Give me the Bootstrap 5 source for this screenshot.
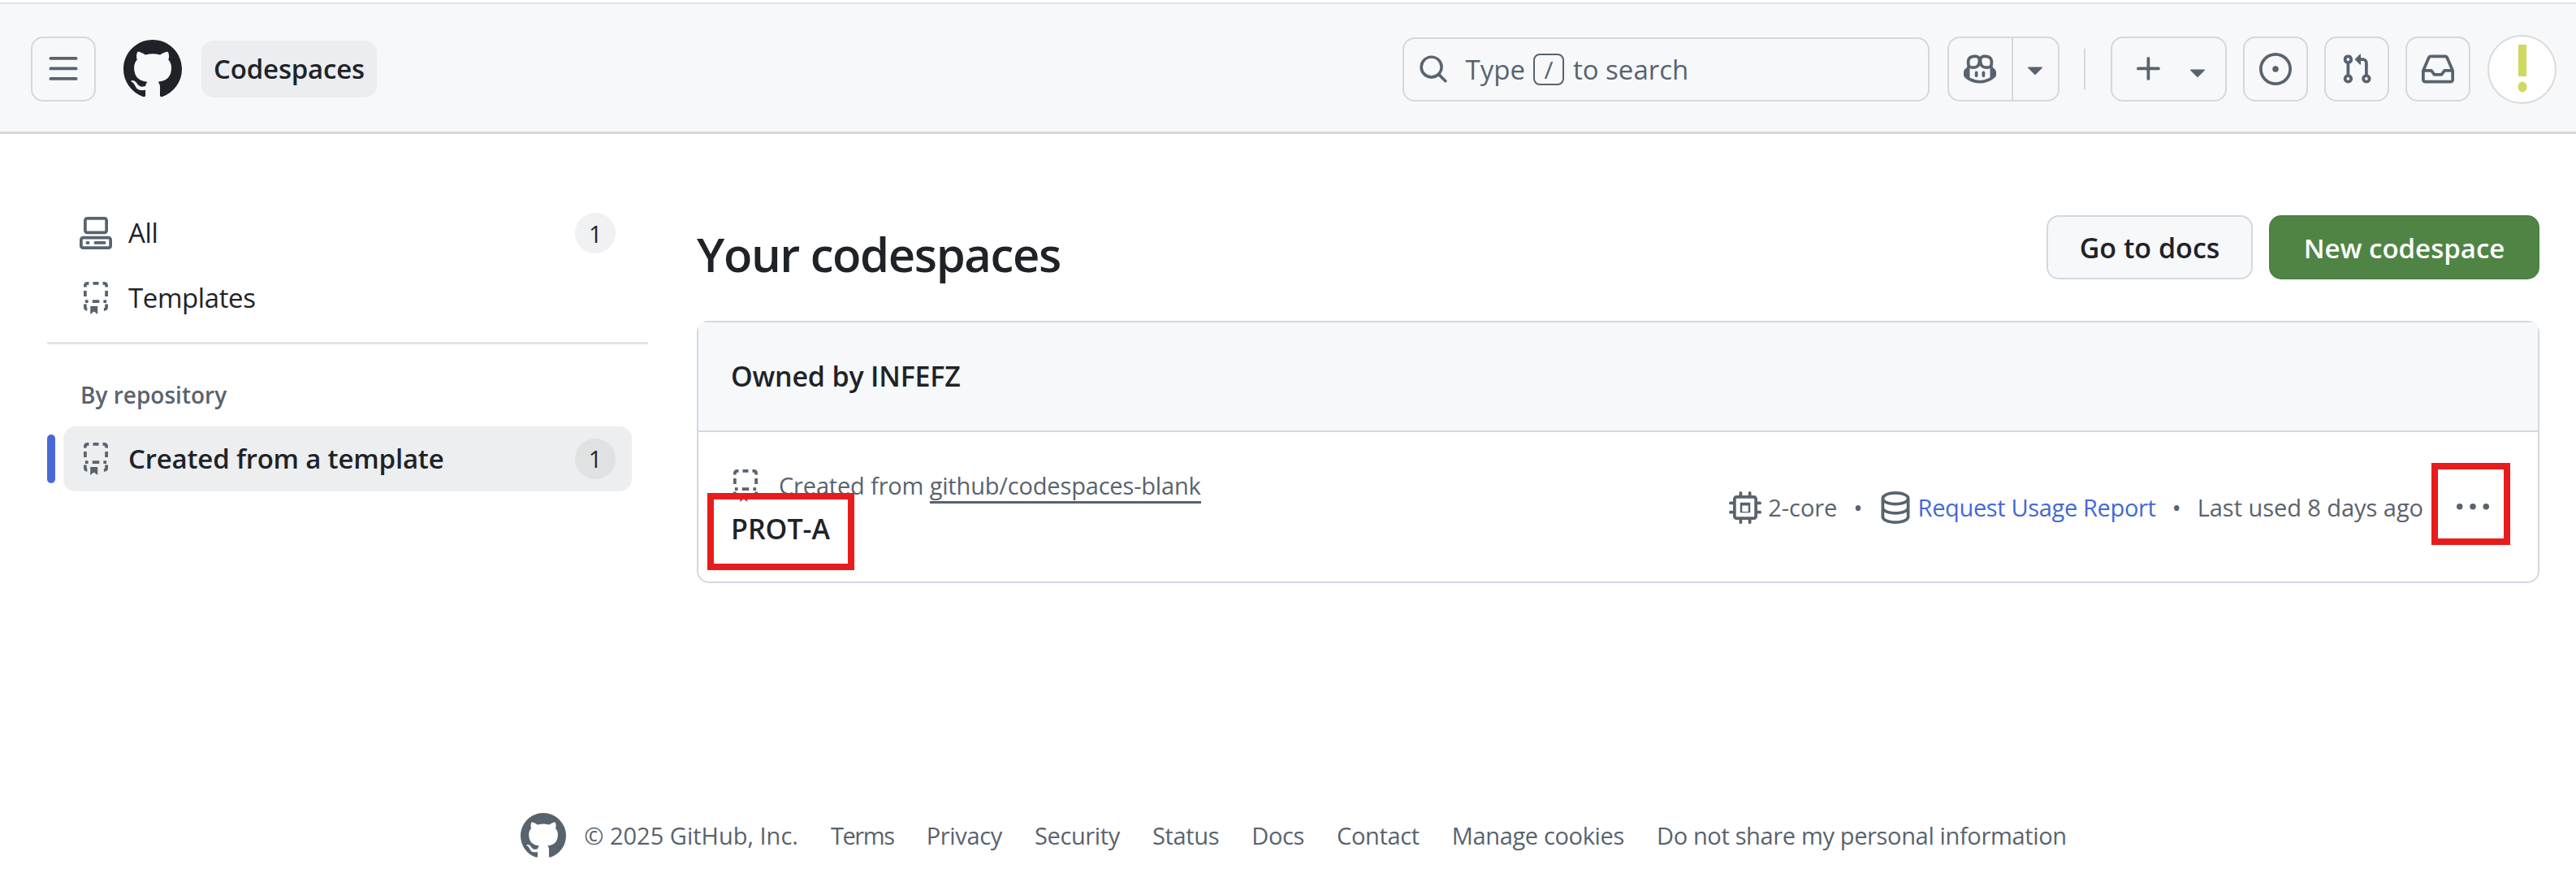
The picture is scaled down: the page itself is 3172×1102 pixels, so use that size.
<!DOCTYPE html>
<html lang="en">
<head>
  <meta charset="UTF-8" />
  <title>Your codespaces</title>
  <link href="https://cdn.jsdelivr.net/npm/bootstrap@5.3.3/dist/css/bootstrap.min.css" rel="stylesheet"/>
  <style>
    body { font-family: "Open Sans", "Liberation Sans", sans-serif; font-size: 33px; color: #1f2328; background: #fff; }
    svg { fill: currentColor; flex-shrink: 0; display: block; }
    .ic { width: 40px; height: 40px; }

    /* top bar */
    .topbar { margin-top: 3px; height: 162px; background: #f6f8fa; border-top: 2px solid #e1e3e6; border-bottom: 3px solid #d3d8dc; padding: 3px 24px 0 38px; }
    .sq-btn { width: 80px; height: 80px; padding: 0; border: 2.5px solid #d1d9e0; border-radius: 15px; color: #59636e; background: transparent; }
    .gh-logo { width: 72px; height: 72px; margin-left: 34px; color: #1f2328; }
    .ctx-pill { margin-left: 24px; height: 70px; width: 216px; background: #ebedf0; border-radius: 15px; font-weight: 600; font-size: 33px; letter-spacing: -.2px; }
    .searchbox { width: 649px; height: 79px; margin-right: 22px; border: 2.5px solid #d1d9e0; border-radius: 15px; color: #59636e; padding: 2px 0 0 17px; }
    .searchbox .ic { width: 38px; height: 38px; margin: -2px 21px 0 0; }
    .slash-key { width: 38px; height: 39px; margin: -2px 11px 0 10px; border: 2.5px solid #59636e; border-radius: 8px; font-size: 30px; }
    .split-btn { width: 138px; height: 80px; border: 2.5px solid #d1d9e0; border-radius: 15px; color: #59636e; }
    .split-btn > span { height: 100%; }
    .split-btn .split-l { width: 79px; border-right: 2.5px solid #d1d9e0; }
    .split-btn .split-r { flex: 1; }
    .bar-sep { width: 2.5px; height: 50px; background: #d1d9e0; margin: 0 31px 0 30px; }
    .plus-btn { width: 143px; height: 80px; border: 2.5px solid #d1d9e0; border-radius: 15px; color: #59636e; padding-left: 25px; margin-right: 20px; }
    .plus-btn .tri { margin: 6px 0 0 20px; }
    .tri { width: 40px; height: 40px; }
    .gap-btn { margin-right: 20px; }
    .gap-last { margin-right: 21px; }
    .avatar-btn { width: 85px; height: 85px; border: 2.5px solid #d9dadc; border-radius: 50%; background: #fff; }
    .avatar-mark { width: 40px; height: 64px; fill: #cfd85f; }

    /* page body */
    .page-wrap { padding: 0 45px 0 58px; }
    .side-col { width: 740px; padding-top: 82px; margin-right: 60px; flex-shrink: 0; }
    .side-link { height: 80px; padding: 0 20px; margin-left: 20px; width: 700px; color: #1f2328; text-decoration: none; letter-spacing: -.4px; }
    .side-link .ic { color: #59636e; margin-right: 20px; }
    .side-count { width: 50px; height: 50px; border-radius: 50%; background: #eff1f3; font-size: 29px; font-weight: 400; color: #1f2328; padding: 0; }
    .side-rule { height: 2.5px; opacity: 1; border: 0; background: #e1e5ea; margin: 14px 0 0; }
    .side-head { font-size: 28px; font-weight: 600; color: #59636e; margin: 43px 0 20px 41px; line-height: 38px; }
    .side-active { background: #eceef0; border-radius: 15px; font-weight: 600; position: relative; letter-spacing: -.2px; }
    .side-active .side-count { background: #dfe1e3; }
    .side-active::before { content: ""; position: absolute; left: -20px; top: 10px; width: 10px; height: 60px; border-radius: 5px; background: #4969d6; }

    .main-col { flex: 1; padding-top: 100px; }
    .main-title { font-size: 58px; font-weight: 600; margin: -2px 0 2px; line-height: 100px; letter-spacing: -1.4px; }
    .act-btn { height: 79px; font-size: 34px; font-weight: 600; border-radius: 15px; padding: 2px 0 0; }
    .act-docs { width: 254px; background: #f6f8fa; border: 2.5px solid #d1d9e0; color: #1f2328; margin-right: 20px; }
    .act-new { width: 333px; font-size: 33px; background: #508445; border: 2.5px solid #4d8043; color: #fff; }
    .spaces-card { margin-top: 30px; border: 2.5px solid #d1d9e0; border-radius: 15px; }
    .spaces-card .card-header { height: 135px; background: #f6f8fa; border-bottom: 2.5px solid #d1d9e0; padding: 0 0 0 40px; font-weight: 600; font-size: 34px; letter-spacing: -.2px; }
    .spaces-row { height: 184px; padding: 0 0 0 40px; }
    .created-wrap { padding-top: 5px; }
    .created-line { font-size: 29px; color: #59636e; height: 40px; margin-top: -3px; letter-spacing: -.17px; }
    .created-line .ic { width: 40px; margin-left: -2px; margin-right: 21px; }
    .created-line a { color: #59636e; text-decoration: none; border-bottom: 3px solid #59636e; line-height: 37px; }
    .space-name { font-weight: 600; font-size: 34px; line-height: 44px; margin-top: 11px; }
    .meta-line { font-size: 29px; color: #59636e; margin: 2px 60px 0 0; letter-spacing: -.05px; }
    .meta-line a { color: #4169d6; text-decoration: none; letter-spacing: -.35px; }
    .meta-dot { margin: 0 20px; font-size: 30px; line-height: 1; }
    .kebab { width: 40px; height: 40px; margin-left: 41px; color: #59636e; }
    .red-box { position: absolute; border: 8px solid #e81c1c; pointer-events: none; }
    .red-a { left: 11px; top: 210px; width: 181px; height: 95px; }
    .red-b { left: 2134px; top: 173px; width: 97px; height: 101px; }

    /* footer */
    .foot-row { margin-top: 283px; padding-left: 14px; color: #59636e; font-size: 29px; letter-spacing: -.35px; }
    .foot-row svg { width: 56px; height: 56px; margin-right: 22px; }
    .foot-row a { color: #59636e; text-decoration: none; margin-left: 40px; }
    .foot-copy { letter-spacing: 0; }
    .foot-row a.foot-short { letter-spacing: -1.4px; }
  </style>
</head>
<body>

<svg width="0" height="0" class="position-absolute">
  <defs>
    <symbol id="i-mark" viewBox="0 0 16 16"><path d="M8 0c4.42 0 8 3.58 8 8a8.013 8.013 0 0 1-5.45 7.59c-.4.08-.55-.17-.55-.38 0-.27.01-1.13.01-2.2 0-.75-.25-1.23-.54-1.48 1.78-.2 3.65-.88 3.65-3.95 0-.88-.31-1.59-.82-2.15.08-.2.36-1.02-.08-2.12 0 0-.67-.22-2.2.82-.64-.18-1.32-.27-2-.27-.68 0-1.36.09-2 .27-1.53-1.03-2.2-.82-2.2-.82-.44 1.1-.16 1.92-.08 2.12-.51.56-.82 1.28-.82 2.15 0 3.06 1.86 3.75 3.64 3.95-.23.2-.44.55-.51 1.07-.46.21-1.61.55-2.33-.66-.15-.24-.6-.83-1.23-.82-.67.01-.27.38.01.53.34.19.73.9.82 1.13.16.45.68 1.31 2.69.94 0 .67.01 1.3.01 1.49 0 .21-.15.45-.55.38A7.995 7.995 0 0 1 0 8c0-4.42 3.58-8 8-8Z"/></symbol>
    <symbol id="i-tri" viewBox="0 0 16 16"><path d="m4.427 7.427 3.396 3.396a.25.25 0 0 0 .354 0l3.396-3.396A.25.25 0 0 0 11.396 7H4.604a.25.25 0 0 0-.177.427Z"/></symbol>
    <symbol id="i-template" viewBox="0 0 16 16">
      <g fill="none" stroke="currentColor" stroke-width="1.5">
        <path d="M2.75 2.6V2c0-.75.5-1.25 1.25-1.25h.6M6.6 .75h2.8M11.4 .75h.6c.75 0 1.25.5 1.25 1.25v.6M2.75 4.4v2.8M13.25 4.4v2.8M2.75 9.6h1.5M6.3 9.6h3.4M11.75 9.6h1.5M2.75 11v1.4c0 .7.4 1.1 1 1.1M13.25 11v1.4c0 .7-.4 1.1-1 1.1h-.3"/>
      </g>
      <path d="M5.3 12h3.6v4L7.1 14.6 5.3 16Z"/>
    </symbol>
  </defs>
</svg>

<!-- top bar -->
<header class="topbar d-flex align-items-center">
  <button class="sq-btn btn d-flex align-items-center justify-content-center" type="button">
    <svg class="ic" viewBox="0 0 16 16"><path d="M1 2.75A.75.75 0 0 1 1.75 2h12.5a.75.75 0 0 1 0 1.5H1.75A.75.75 0 0 1 1 2.75Zm0 5A.75.75 0 0 1 1.75 7h12.5a.75.75 0 0 1 0 1.5H1.75A.75.75 0 0 1 1 7.75ZM1.75 12h12.5a.75.75 0 0 1 0 1.5H1.75a.75.75 0 0 1 0-1.5Z"/></svg>
  </button>
  <svg class="gh-logo"><use href="#i-mark"/></svg>
  <div class="ctx-pill d-flex align-items-center justify-content-center">Codespaces</div>

  <div class="ms-auto searchbox d-flex align-items-center">
    <svg class="ic" viewBox="0 0 16 16"><path d="M10.68 11.74a6 6 0 0 1-7.922-8.982 6 6 0 0 1 8.982 7.922l3.04 3.04a.749.749 0 0 1-.326 1.275.749.749 0 0 1-.734-.215ZM11.5 7a4.499 4.499 0 1 0-8.997 0A4.499 4.499 0 0 0 11.5 7Z"/></svg>
    <span>Type</span>
    <span class="slash-key d-flex align-items-center justify-content-center">/</span>
    <span>to search</span>
  </div>

  <div class="split-btn d-flex align-items-center">
    <span class="split-l d-flex align-items-center justify-content-center">
      <svg class="ic" viewBox="0 0 16 16"><path d="M7.998 15.035c-4.562 0-7.873-2.914-7.998-3.749V9.338c.085-.628.677-1.686 1.588-2.065.013-.07.024-.143.036-.218.029-.183.06-.384.126-.612-.201-.508-.254-1.084-.254-1.656 0-.87.128-1.769.693-2.484.579-.733 1.494-1.124 2.724-1.261 1.206-.134 2.262.034 2.944.765.05.053.096.108.139.165.044-.057.094-.112.143-.165.682-.731 1.738-.899 2.944-.765 1.23.137 2.145.528 2.724 1.261.566.715.693 1.614.693 2.484 0 .572-.053 1.148-.254 1.656.066.228.098.429.126.612.012.076.024.148.037.218.924.385 1.522 1.471 1.591 2.095v1.872c0 .766-3.351 3.795-8.002 3.795Zm0-1.485c2.28 0 4.584-1.11 5.002-1.433V7.862l-.023-.116c-.49.21-1.075.291-1.727.291-1.146 0-2.059-.327-2.71-.991A3.222 3.222 0 0 1 8 6.303a3.24 3.24 0 0 1-.544.743c-.65.664-1.563.991-2.71.991-.652 0-1.236-.081-1.727-.291l-.023.116v4.255c.419.323 2.722 1.433 5.002 1.433ZM6.762 2.83c-.193-.206-.637-.413-1.682-.297-1.019.113-1.479.404-1.713.7-.247.312-.369.789-.369 1.554 0 .793.129 1.171.308 1.371.162.181.519.379 1.442.379.853 0 1.339-.235 1.638-.54.315-.322.527-.827.617-1.553.117-.935-.037-1.395-.241-1.614Zm4.155-.297c-1.044-.116-1.488.091-1.681.297-.204.219-.359.679-.242 1.614.091.726.303 1.231.618 1.553.299.305.784.54 1.638.54.922 0 1.28-.198 1.442-.379.179-.2.308-.578.308-1.371 0-.765-.123-1.242-.37-1.554-.233-.296-.693-.587-1.713-.7Z"/><path d="M6.25 9.037a.75.75 0 0 1 .75.75v1.501a.75.75 0 0 1-1.5 0V9.787a.75.75 0 0 1 .75-.75Zm4.25.75v1.501a.75.75 0 0 1-1.5 0V9.787a.75.75 0 0 1 1.5 0Z"/></svg>
    </span>
    <span class="split-r d-flex align-items-center justify-content-center"><svg class="tri"><use href="#i-tri"/></svg></span>
  </div>
  <span class="bar-sep"></span>
  <div class="plus-btn d-flex align-items-center">
    <svg class="ic" viewBox="0 0 16 16"><path d="M7.75 2a.75.75 0 0 1 .75.75V7h4.25a.75.75 0 0 1 0 1.5H8.5v4.25a.75.75 0 0 1-1.5 0V8.5H2.75a.75.75 0 0 1 0-1.5H7V2.75A.75.75 0 0 1 7.75 2Z"/></svg>
    <svg class="tri"><use href="#i-tri"/></svg>
  </div>
  <button class="sq-btn gap-btn btn d-flex align-items-center justify-content-center" type="button">
    <svg class="ic" viewBox="0 0 16 16"><path d="M8 9.5a1.5 1.5 0 1 0 0-3 1.5 1.5 0 0 0 0 3Z"/><path d="M8 0a8 8 0 1 1 0 16A8 8 0 0 1 8 0ZM1.5 8a6.5 6.5 0 1 0 13 0 6.5 6.5 0 0 0-13 0Z"/></svg>
  </button>
  <button class="sq-btn gap-btn btn d-flex align-items-center justify-content-center" type="button">
    <svg class="ic" viewBox="0 0 16 16"><path d="M1.5 3.25a2.25 2.25 0 1 1 3 2.122v5.256a2.251 2.251 0 1 1-1.5 0V5.372A2.25 2.25 0 0 1 1.5 3.25Zm5.677-.177L9.573.677A.25.25 0 0 1 10 .854V2.5h1A2.5 2.5 0 0 1 13.5 5v5.628a2.251 2.251 0 1 1-1.5 0V5a1 1 0 0 0-1-1h-1v1.646a.25.25 0 0 1-.427.177L7.177 3.427a.25.25 0 0 1 0-.354ZM3.75 2.5a.75.75 0 1 0 0 1.5.75.75 0 0 0 0-1.5Zm0 9.5a.75.75 0 1 0 0 1.5.75.75 0 0 0 0-1.5Zm8.25.75a.75.75 0 1 0 1.5 0 .75.75 0 0 0-1.5 0Z"/></svg>
  </button>
  <button class="sq-btn gap-last btn d-flex align-items-center justify-content-center" type="button">
    <svg class="ic" viewBox="0 0 16 16"><path d="M2.8 2.06A1.75 1.75 0 0 1 4.41 1h7.18c.7 0 1.333.417 1.61 1.06l2.74 6.395c.04.093.06.194.06.295v4.5A1.75 1.75 0 0 1 14.25 15H1.75A1.75 1.75 0 0 1 0 13.25v-4.5c0-.101.02-.202.06-.295Zm1.61.44a.25.25 0 0 0-.23.152L1.887 8H4.75a.75.75 0 0 1 .6.3L6.625 10h2.75l1.275-1.7a.75.75 0 0 1 .6-.3h2.863L11.82 2.652a.25.25 0 0 0-.23-.152Zm10.09 7h-2.875l-1.275 1.7a.75.75 0 0 1-.6.3h-3.5a.75.75 0 0 1-.6-.3L4.375 9.5H1.5v3.75c0 .138.112.25.25.25h12.5a.25.25 0 0 0 .25-.25Z"/></svg>
  </button>
  <div class="avatar-btn d-flex align-items-center justify-content-center">
    <svg class="avatar-mark" viewBox="0 0 40 64"><rect x="15" y="2" width="10" height="39"/><ellipse cx="20" cy="54" rx="5.5" ry="6.5"/></svg>
  </div>
</header>

<div class="page-wrap d-flex">
  <!-- sidebar -->
  <aside class="side-col">
    <a class="side-link d-flex align-items-center" href="#">
      <svg class="ic" viewBox="0 0 16 16"><path d="M0 11.25c0-.966.784-1.75 1.75-1.75h12.5c.966 0 1.75.784 1.75 1.75v3A1.75 1.75 0 0 1 14.25 16H1.75A1.75 1.75 0 0 1 0 14.25Zm2-9.5C2 .784 2.784 0 3.75 0h8.5C13.216 0 14 .784 14 1.75v5a1.75 1.75 0 0 1-1.75 1.75h-8.5A1.75 1.75 0 0 1 2 6.75Zm1.75-.25a.25.25 0 0 0-.25.25v5c0 .138.112.25.25.25h8.5a.25.25 0 0 0 .25-.25v-5a.25.25 0 0 0-.25-.25Zm-2 9.5a.25.25 0 0 0-.25.25v3c0 .138.112.25.25.25h12.5a.25.25 0 0 0 .25-.25v-3a.25.25 0 0 0-.25-.25Z"/><path d="M7 12.75a.75.75 0 0 1 .75-.75h4.5a.75.75 0 0 1 0 1.5h-4.5a.75.75 0 0 1-.75-.75Zm-4 0a.75.75 0 0 1 .75-.75h.5a.75.75 0 0 1 0 1.5h-.5a.75.75 0 0 1-.75-.75Z"/></svg>
      <span>All</span>
      <span class="side-count badge ms-auto d-flex align-items-center justify-content-center">1</span>
    </a>
    <a class="side-link d-flex align-items-center" href="#">
      <svg class="ic"><use href="#i-template"/></svg>
      <span>Templates</span>
    </a>
    <hr class="side-rule">
    <div class="side-head">By repository</div>
    <a class="side-link side-active d-flex align-items-center" href="#">
      <svg class="ic"><use href="#i-template"/></svg>
      <span>Created from a template</span>
      <span class="side-count badge ms-auto d-flex align-items-center justify-content-center">1</span>
    </a>
  </aside>

  <!-- main -->
  <main class="main-col">
    <div class="d-flex align-items-start justify-content-between">
      <h1 class="main-title">Your codespaces</h1>
      <div class="d-flex">
        <a class="act-btn act-docs btn d-flex align-items-center justify-content-center" href="#">Go to docs</a>
        <a class="act-btn act-new btn d-flex align-items-center justify-content-center" href="#">New codespace</a>
      </div>
    </div>

    <div class="spaces-card card position-relative">
      <div class="card-header d-flex align-items-center">Owned by INFEFZ</div>
      <div class="spaces-row d-flex align-items-center justify-content-between">
        <div class="created-wrap">
          <div class="created-line d-flex align-items-center">
            <svg class="ic"><use href="#i-template"/></svg>
            <span>Created from&nbsp;<a href="#">github/codespaces-blank</a></span>
          </div>
          <div class="space-name">PROT-A</div>
        </div>
        <div class="meta-line d-flex align-items-center">
          <svg class="ic me-2" viewBox="0 0 16 16" fill-rule="evenodd"><path d="M5.75 0a.75.75 0 0 1 .75.75V2h3V.75a.75.75 0 0 1 1.5 0V2h1.25c.966 0 1.75.784 1.75 1.75V5h1.25a.75.75 0 0 1 0 1.5H14v3h1.25a.75.75 0 0 1 0 1.5H14v1.25A1.75 1.75 0 0 1 12.25 14H11v1.25a.75.75 0 0 1-1.5 0V14h-3v1.25a.75.75 0 0 1-1.5 0V14H3.75A1.75 1.75 0 0 1 2 12.25V11H.75a.75.75 0 0 1 0-1.5H2v-3H.75a.75.75 0 0 1 0-1.5H2V3.75C2 2.784 2.784 2 3.75 2H5V.75A.75.75 0 0 1 5.75 0Zm-2 3.5a.25.25 0 0 0-.25.25v8.5c0 .138.112.25.25.25h8.5a.25.25 0 0 0 .25-.25v-8.5a.25.25 0 0 0-.25-.25ZM5.75 5.5h4.5a.25.25 0 0 1 .25.25v4.5a.25.25 0 0 1-.25.25h-4.5a.25.25 0 0 1-.25-.25v-4.5a.25.25 0 0 1 .25-.25Zm.75 1.5v3h3V7Z"/></svg>
          <span>2-core</span>
          <span class="meta-dot">•</span>
          <svg class="ic me-2" viewBox="0 0 16 16"><path d="M1 3.5c0-.626.292-1.165.7-1.59.406-.422.956-.767 1.579-1.041C4.525.32 6.195 0 8 0c1.805 0 3.475.32 4.722.869.622.274 1.172.62 1.578 1.04.408.426.7.965.7 1.591v9c0 .626-.292 1.165-.7 1.59-.406.422-.956.767-1.579 1.041C11.476 15.68 9.806 16 8 16c-1.805 0-3.475-.32-4.721-.869-.623-.274-1.173-.619-1.579-1.041-.408-.425-.7-.964-.7-1.59Zm1.5 0c0 .133.058.318.282.551.227.237.591.483 1.101.707C4.898 5.205 6.353 5.5 8 5.5c1.646 0 3.101-.295 4.118-.742.508-.224.873-.471 1.1-.708.224-.232.282-.417.282-.55 0-.133-.058-.318-.282-.551-.227-.237-.591-.483-1.101-.707C11.102 1.795 9.647 1.5 8 1.5c-1.646 0-3.101.295-4.118.742-.508.224-.873.471-1.1.708-.224.232-.282.417-.282.55Zm0 4.5c0 .133.058.318.282.551.227.237.591.483 1.101.707C4.898 9.705 6.353 10 8 10c1.646 0 3.101-.295 4.118-.742.508-.224.873-.471 1.1-.708.224-.232.282-.417.282-.55V5.724c-.241.15-.503.286-.778.407C11.475 6.68 9.805 7 8 7c-1.805 0-3.475-.32-4.721-.869a6.15 6.15 0 0 1-.779-.407Zm0 2.225V12.5c0 .133.058.318.282.55.227.237.592.484 1.1.708 1.016.447 2.471.742 4.118.742 1.647 0 3.102-.295 4.117-.742.51-.224.874-.47 1.101-.707.224-.233.282-.418.282-.551v-2.275c-.241.15-.503.285-.778.406-1.247.549-2.917.869-4.722.869-1.805 0-3.475-.32-4.721-.869a6.327 6.327 0 0 1-.779-.406Z"/></svg>
          <a href="#">Request Usage Report</a>
          <span class="meta-dot">•</span>
          <span>Last used 8 days ago</span>
          <svg class="kebab" viewBox="0 0 16 16"><path d="M8 9a1.5 1.5 0 1 0 0-3 1.5 1.5 0 0 0 0 3ZM1.5 9a1.5 1.5 0 1 0 0-3 1.5 1.5 0 0 0 0 3Zm13 0a1.5 1.5 0 1 0 0-3 1.5 1.5 0 0 0 0 3Z"/></svg>
        </div>
      </div>
      <div class="red-box red-a"></div>
      <div class="red-box red-b"></div>
    </div>
  </main>
</div>

<footer class="foot-row d-flex align-items-center justify-content-center">
  <svg><use href="#i-mark"/></svg>
  <span class="foot-copy">© 2025 GitHub, Inc.</span>
  <a class="foot-short" href="#">Terms</a>
  <a href="#">Privacy</a>
  <a href="#">Security</a>
  <a href="#">Status</a>
  <a href="#">Docs</a>
  <a href="#">Contact</a>
  <a href="#">Manage cookies</a>
  <a href="#">Do not share my personal information</a>
</footer>

</body>
</html>
